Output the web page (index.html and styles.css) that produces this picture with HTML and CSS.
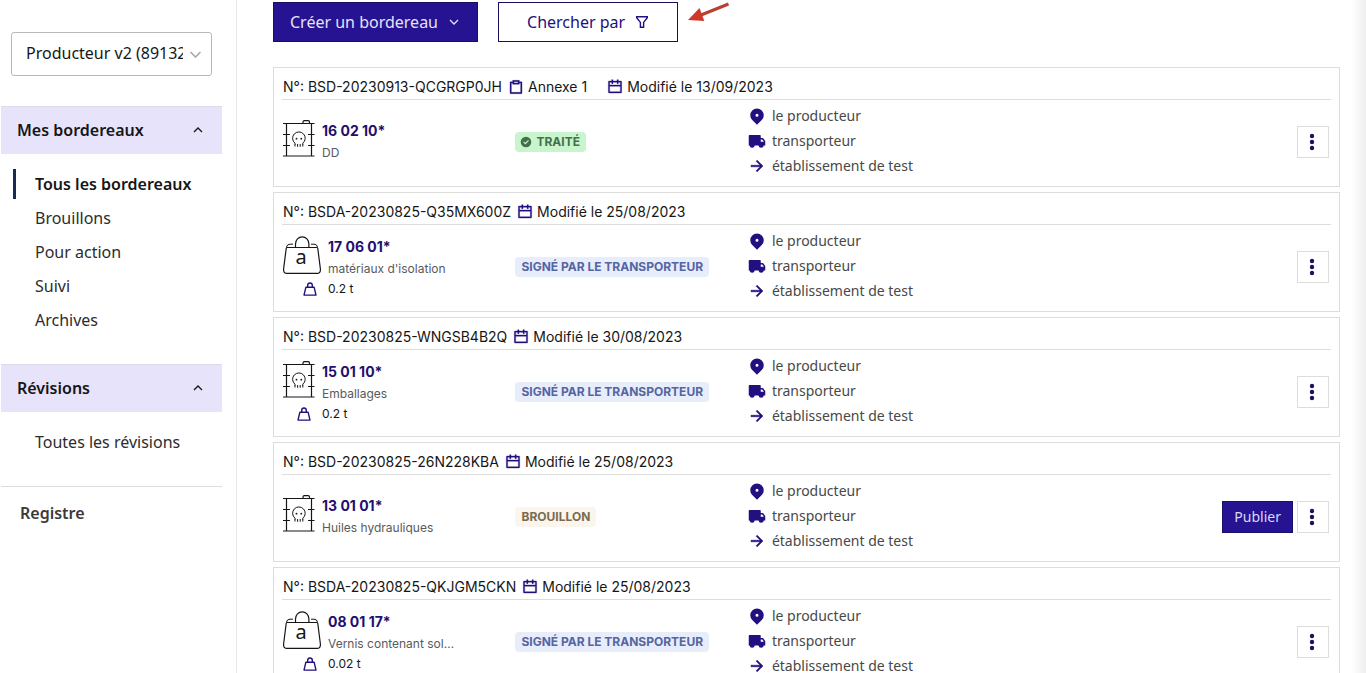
FILE: index.html
```html
<!DOCTYPE html>
<html lang="fr">
<head>
<meta charset="utf-8">
<title>Mes bordereaux</title>
<link rel="stylesheet" href="styles.css">
</head>
<body>
<svg class="sprite" aria-hidden="true">
  <symbol id="pin" viewBox="0 0 24 24"><path d="M18.364 17.364 12 23.728l-6.364-6.364a9 9 0 1 1 12.728 0zM12 13a2 2 0 1 0 0-4 2 2 0 0 0 0 4z"/></symbol>
  <symbol id="truck" viewBox="0 0 24 24"><path d="M17 8h3l3 4.056V18h-2.035a3.5 3.5 0 0 1-6.93 0h-5.07a3.5 3.5 0 0 1-6.93 0H1V5a1 1 0 0 1 1-1h14a1 1 0 0 1 1 1v3zm0 2v3h4v-.285L18.992 10H17z"/></symbol>
  <symbol id="arrow" viewBox="0 0 24 24"><path d="m16.172 11-5.364-5.364 1.414-1.414L20 12l-7.778 7.778-1.414-1.414L16.172 13H4v-2z" stroke="currentColor" stroke-width=".7"/></symbol>
  <symbol id="calendar" viewBox="0 0 24 24"><path d="M17 3h4a1 1 0 0 1 1 1v16a1 1 0 0 1-1 1H3a1 1 0 0 1-1-1V4a1 1 0 0 1 1-1h4V1h2v2h6V1h2v2zm-2 2H9v2H7V5H4v4h16V5h-3v2h-2V5zm5 6H4v8h16v-8z" stroke="currentColor" stroke-width=".5"/></symbol>
  <symbol id="clipboard" viewBox="0 0 24 24"><path d="M7 4V2h10v2h3.007c.548 0 .993.445.993.993v16.014a.994.994 0 0 1-.993.993H3.993A.994.994 0 0 1 3 21.007V4.993C3 4.445 3.445 4 3.993 4H7zm0 2H5v14h14V6h-2v2H7V6zm2-2v2h6V4H9z" stroke="currentColor" stroke-width=".5"/></symbol>
  <symbol id="weight" viewBox="0 0 14 14"><g fill="none" stroke="currentColor" stroke-width="1.4" stroke-linejoin="round"><path d="M2.9 5.2h8.2l1.9 7.9H1z"/><path d="M4.7 5V3.3a2.3 2.3 0 0 1 4.6 0V5"/></g></symbol>
  <symbol id="chevron" viewBox="0 0 12 12"><path d="m2 4 4 4 4-4" fill="none" stroke="currentColor" stroke-width="1.3"/></symbol>
  <symbol id="chevron-up" viewBox="0 0 12 12"><path d="m2 8 4-4 4 4" fill="none" stroke="currentColor" stroke-width="1.3"/></symbol>
  <symbol id="funnel" viewBox="0 0 14 14"><path d="M1.7 1.7h10.6v1L8.6 7.4v4.9H5.4V7.4L1.7 2.7z" fill="none" stroke="currentColor" stroke-width="1.4"/></symbol>
  <symbol id="dots" viewBox="0 0 16 20"><circle cx="8" cy="4" r="2.2"/><circle cx="8" cy="10" r="2.2"/><circle cx="8" cy="16" r="2.2"/></symbol>
  <symbol id="check" viewBox="0 0 12 12"><path fill-rule="evenodd" d="M6 .7a5.3 5.3 0 1 1 0 10.6A5.3 5.3 0 0 1 6 .7zM5.4 8.4l3.5-3.6-.8-.8-2.7 2.8L4 5.400l-.8.8z"/></symbol>
  <symbol id="drum" viewBox="0 0 32 38"><g fill="none" stroke="#161616" stroke-width="1.2">
    <path d="M0 3.500h31.500M0 36h31.500M3.500 3.500V36M28.500 3.500V36M0 14.500h7M0 25.500h7M25 14.500h6.500M25 25.500h6.500M20 3.500V2q0-1.400 1.400-1.400h3.700q1.400 0 1.400 1.400v1.500"/>
    <path d="M12 24.500v-1.300a6.300 6.300 0 1 1 7.800 0v1.300M12 24v2.500M14.600 24v2.800M17.200 24v2.800M19.800 24v2.500" stroke-width="1"/></g>
    <circle cx="13.500" cy="18.700" r=".9"/><circle cx="18.300" cy="18.700" r=".9"/></symbol>
  <symbol id="bag" viewBox="0 0 38 38"><g fill="none" stroke="#161616" stroke-width="1.200">
    <path d="M4 11.500h30q.6 0 .8 1l2.600 20.500q.3 4.400-3.400 4.400H4q-3.700 0-3.400-4.400L3.200 12.500q.2-1 .8-1zM12.500 11.500V8a6.700 7.200 0 0 1 13.400 0v3.500"/>
    <path d="M3.500 11q.5-2.800 3.500-2.800h3M34.500 11q-.5-2.800-3.500-2.800h-3" stroke-width="1"/></g>
    <text class="bag-letter" x="18" y="28" text-anchor="middle">a</text></symbol>
</svg>

<div class="shell">
  <aside class="sidebar">
    <div class="company">
      <select class="company-select" aria-label="Établissement"><option>Producteur v2 (89132000012345)</option></select>
      <svg class="company-chevron"><use href="#chevron"/></svg>
    </div>
    <nav aria-label="Bordereaux">
      <button class="nav-head" aria-expanded="true">Mes bordereaux <svg class="i12"><use href="#chevron-up"/></svg></button>
      <ul class="nav-list">
        <li><a class="active" href="#tous">Tous les bordereaux</a></li>
        <li><a href="#brouillons">Brouillons</a></li>
        <li><a href="#action">Pour action</a></li>
        <li><a href="#suivi">Suivi</a></li>
        <li><a href="#archives">Archives</a></li>
      </ul>
      <button class="nav-head" aria-expanded="true">Révisions <svg class="i12"><use href="#chevron-up"/></svg></button>
      <ul class="nav-list">
        <li><a href="#revisions">Toutes les révisions</a></li>
      </ul>
      <a class="nav-single" href="#registre">Registre</a>
    </nav>
  </aside>

  <main class="content">
    <div class="toolbar">
      <button class="btn primary">Créer un bordereau <svg class="i12"><use href="#chevron"/></svg></button>
      <button class="btn outline">Chercher par <svg class="i14"><use href="#funnel"/></svg></button>
      <svg class="pointer" viewBox="0 0 42 22" aria-hidden="true"><path d="M40.500 2 13 13" stroke="#b8402f" stroke-width="3"/><path d="M0 18 11.500 6l4.800 13z" fill="#d0382c"/></svg>
    </div>

    <ul class="cards">
      <li class="card">
        <div class="card-head">
          <span>N°: BSD-20230913-QCGRGP0JH</span>
          <span class="meta annex"><svg class="i16"><use href="#clipboard"/></svg>Annexe 1</span>
          <span class="meta"><svg class="i16"><use href="#calendar"/></svg>Modifié le 13/09/2023</span>
        </div>
        <div class="card-body">
          <div class="waste"><svg class="drum"><use href="#drum"/></svg><div><strong class="code">16 02 10*</strong><p class="name">DD</p></div></div>
          <div><span class="badge green"><svg class="i12"><use href="#check"/></svg>TRAITÉ</span></div>
          <div class="end">
            <ul class="actors">
              <li><svg class="i18"><use href="#pin"/></svg>le producteur</li>
              <li><svg class="i18"><use href="#truck"/></svg>transporteur</li>
              <li><svg class="i18"><use href="#arrow"/></svg>établissement de test</li>
            </ul>
            <div class="actions"><button class="more" aria-label="Autres actions"><svg><use href="#dots"/></svg></button></div>
          </div>
        </div>
      </li>

      <li class="card">
        <div class="card-head">
          <span>N°: BSDA-20230825-Q35MX600Z</span>
          <span class="meta"><svg class="i16"><use href="#calendar"/></svg>Modifié le 25/08/2023</span>
        </div>
        <div class="card-body">
          <div class="waste"><svg class="bag"><use href="#bag"/></svg><div><strong class="code">17 06 01*</strong><p class="name">matériaux d'isolation</p></div>
            <svg class="weight-icon"><use href="#weight"/></svg><p class="weight">0.2 t</p></div>
          <div><span class="badge blue">SIGNÉ PAR LE TRANSPORTEUR</span></div>
          <div class="end">
            <ul class="actors">
              <li><svg class="i18"><use href="#pin"/></svg>le producteur</li>
              <li><svg class="i18"><use href="#truck"/></svg>transporteur</li>
              <li><svg class="i18"><use href="#arrow"/></svg>établissement de test</li>
            </ul>
            <div class="actions"><button class="more" aria-label="Autres actions"><svg><use href="#dots"/></svg></button></div>
          </div>
        </div>
      </li>

      <li class="card">
        <div class="card-head">
          <span>N°: BSD-20230825-WNGSB4B2Q</span>
          <span class="meta"><svg class="i16"><use href="#calendar"/></svg>Modifié le 30/08/2023</span>
        </div>
        <div class="card-body">
          <div class="waste"><svg class="drum"><use href="#drum"/></svg><div><strong class="code">15 01 10*</strong><p class="name">Emballages</p></div>
            <svg class="weight-icon"><use href="#weight"/></svg><p class="weight">0.2 t</p></div>
          <div><span class="badge blue">SIGNÉ PAR LE TRANSPORTEUR</span></div>
          <div class="end">
            <ul class="actors">
              <li><svg class="i18"><use href="#pin"/></svg>le producteur</li>
              <li><svg class="i18"><use href="#truck"/></svg>transporteur</li>
              <li><svg class="i18"><use href="#arrow"/></svg>établissement de test</li>
            </ul>
            <div class="actions"><button class="more" aria-label="Autres actions"><svg><use href="#dots"/></svg></button></div>
          </div>
        </div>
      </li>

      <li class="card">
        <div class="card-head">
          <span>N°: BSD-20230825-26N228KBA</span>
          <span class="meta"><svg class="i16"><use href="#calendar"/></svg>Modifié le 25/08/2023</span>
        </div>
        <div class="card-body">
          <div class="waste"><svg class="drum"><use href="#drum"/></svg><div><strong class="code">13 01 01*</strong><p class="name">Huiles hydrauliques</p></div></div>
          <div><span class="badge sand">BROUILLON</span></div>
          <div class="end">
            <ul class="actors">
              <li><svg class="i18"><use href="#pin"/></svg>le producteur</li>
              <li><svg class="i18"><use href="#truck"/></svg>transporteur</li>
              <li><svg class="i18"><use href="#arrow"/></svg>établissement de test</li>
            </ul>
            <div class="actions"><button class="publish">Publier</button><button class="more" aria-label="Autres actions"><svg><use href="#dots"/></svg></button></div>
          </div>
        </div>
      </li>

      <li class="card">
        <div class="card-head">
          <span>N°: BSDA-20230825-QKJGM5CKN</span>
          <span class="meta"><svg class="i16"><use href="#calendar"/></svg>Modifié le 25/08/2023</span>
        </div>
        <div class="card-body">
          <div class="waste"><svg class="bag"><use href="#bag"/></svg><div><strong class="code">08 01 17*</strong><p class="name">Vernis contenant sol…</p></div>
            <svg class="weight-icon"><use href="#weight"/></svg><p class="weight">0.02 t</p></div>
          <div><span class="badge blue">SIGNÉ PAR LE TRANSPORTEUR</span></div>
          <div class="end">
            <ul class="actors">
              <li><svg class="i18"><use href="#pin"/></svg>le producteur</li>
              <li><svg class="i18"><use href="#truck"/></svg>transporteur</li>
              <li><svg class="i18"><use href="#arrow"/></svg>établissement de test</li>
            </ul>
            <div class="actions"><button class="more" aria-label="Autres actions"><svg><use href="#dots"/></svg></button></div>
          </div>
        </div>
      </li>
    </ul>
  </main>
  <div class="edge"></div>
</div>
</body>
</html>
```
FILE: styles.css
```css
* { box-sizing: border-box; }
body {
  margin: 0;
  font-family: "Noto Sans", "Open Sans", sans-serif;
  font-size: 14px;
  color: #161616;
  background: #fff;
}
ul, p { margin: 0; padding: 0; list-style: none; }
a { color: inherit; text-decoration: none; }
button, select { font: inherit; color: inherit; border-radius: 0; }
svg { fill: currentColor; flex: none; display: block; }
.sprite { position: absolute; width: 0; height: 0; }
.i12 { width: 12px; height: 12px; }
.i14 { width: 14px; height: 14px; }
.i16 { width: 16px; height: 16px; }
.i18 { width: 18px; height: 18px; }

.shell { display: flex; height: 100vh; overflow: hidden; }

.sidebar {
  flex: none;
  width: 237px;
  border-right: 1px solid #e8e8e8;
  padding: 32px 14px 0 1px;
}
.company { display: grid; align-items: center; margin: 0 10px 30px; }
.company-select, .company-chevron { grid-area: 1 / 1; }
.company-select {
  appearance: none;
  width: 100%;
  height: 44px;
  padding: 0 28px 2px 14px;
  font-size: 16px;
  background: #fff;
  border: 1px solid #b8b8bc;
  border-radius: 3px;
}
.company-chevron { width: 15px; height: 15px; justify-self: end; margin-right: 9px; color: #aaa; pointer-events: none; }

.nav-head {
  display: flex;
  align-items: center;
  justify-content: space-between;
  width: 100%;
  height: 48px;
  padding: 0 18px 2px 16px;
  border: 0;
  border-top: 1px solid #dcdaea;
  background: #e6e3fb;
  font-size: 16px;
  font-weight: 600;
}
.nav-list { padding: 13px 0 27px 12px; font-size: 16px; }
.nav-list a { display: flex; align-items: center; height: 34px; padding-left: 22px; color: #2c2c2c; }
.nav-list a.active { height: 30px; margin: 2px 0; padding-left: 19px; border-left: 3px solid #1b2a55; color: #161616; font-weight: 600; }
.nav-single { display: block; border-top: 1px solid #ddd; padding: 14px 19px; line-height: 24px; font-size: 16px; font-weight: 600; color: #3a3a3a; }

.content { flex: 1; min-width: 0; padding: 2px 11px 0 36px; }
.toolbar { display: flex; gap: 20px; margin-bottom: 25px; }
.btn {
  display: flex;
  align-items: center;
  justify-content: center;
  gap: 10px;
  height: 40px;
  font-size: 16px;
  border: 1px solid #190f5c;
}
.primary { padding: 0 17px 0 16px; background: #251391; color: #e6e2fa; }
.outline { padding: 0 28px; background: #fff; color: #221080; }
.pointer { width: 42px; height: 22px; margin-left: -10px; }

.cards { display: grid; gap: 5px; }
.card { border: 1px solid #ddd; }
.card-head {
  display: flex;
  gap: 6px;
  margin: 0 8px;
  padding: 8px 1px 1px;
  border-bottom: 1px solid #ddd;
  line-height: 22px;
  font-family: "Inter", sans-serif;
}
.meta { display: flex; align-items: center; gap: 4px; }
.meta svg { color: #221080; }
.annex { margin-right: 14px; }
.card-body {
  display: grid;
  grid-template-columns: 2fr 2fr 5fr;
  align-items: center;
  padding: 3px 10px 6px 9px;
}
.waste {
  display: grid;
  grid-template-columns: auto 1fr;
  column-gap: 7px;
  align-items: start;
  font-family: "Inter", sans-serif;
}
.code { display: block; line-height: 22px; color: #1f0f6e; font-weight: 700; }
.name { font-size: 12px; line-height: 22px; color: #5a5a5a; }
.drum { width: 32px; height: 38px; }
.bag { width: 38px; height: 38px; }
.bag-letter { font: 20px "Noto Sans", sans-serif; }
.weight-icon { width: 14px; height: 14px; justify-self: end; margin: 2px 4px 0 0; color: #221080; }
.weight { font-size: 12px; line-height: 18px; }

.badge {
  display: inline-flex;
  align-items: center;
  gap: 4px;
  padding: 0 6px;
  border-radius: 4px;
  font-family: "Inter", sans-serif;
  font-size: 12px;
  font-weight: 700;
  line-height: 20px;
}
.green { background: #c8f5cd; color: #447049; padding-left: 5px; }
.blue { background: #e8edfc; color: #5565a0; }
.sand { background: #faf6ee; color: #7a6c50; }

.end { display: flex; align-items: center; justify-content: space-between; }
.actors { padding-bottom: 2px; }
.actors li { display: flex; align-items: center; gap: 6px; line-height: 25px; color: #484848; }
.actors svg { color: #221080; }
.actions { display: flex; gap: 4px; }
.more {
  display: grid;
  place-items: center;
  width: 32px;
  height: 32px;
  padding: 0;
  border: 1px solid #ddd;
  background: #fff;
  color: #1f0f5e;
}
.more svg { width: 16px; height: 20px; margin-right: 2px; }
.publish { height: 32px; padding: 0 11px; border: 1px solid #190f6c; background: #251391; color: #dcd8f8; }

.edge { flex: none; width: 15px; background: linear-gradient(to right, #fff, #eee); }
```
